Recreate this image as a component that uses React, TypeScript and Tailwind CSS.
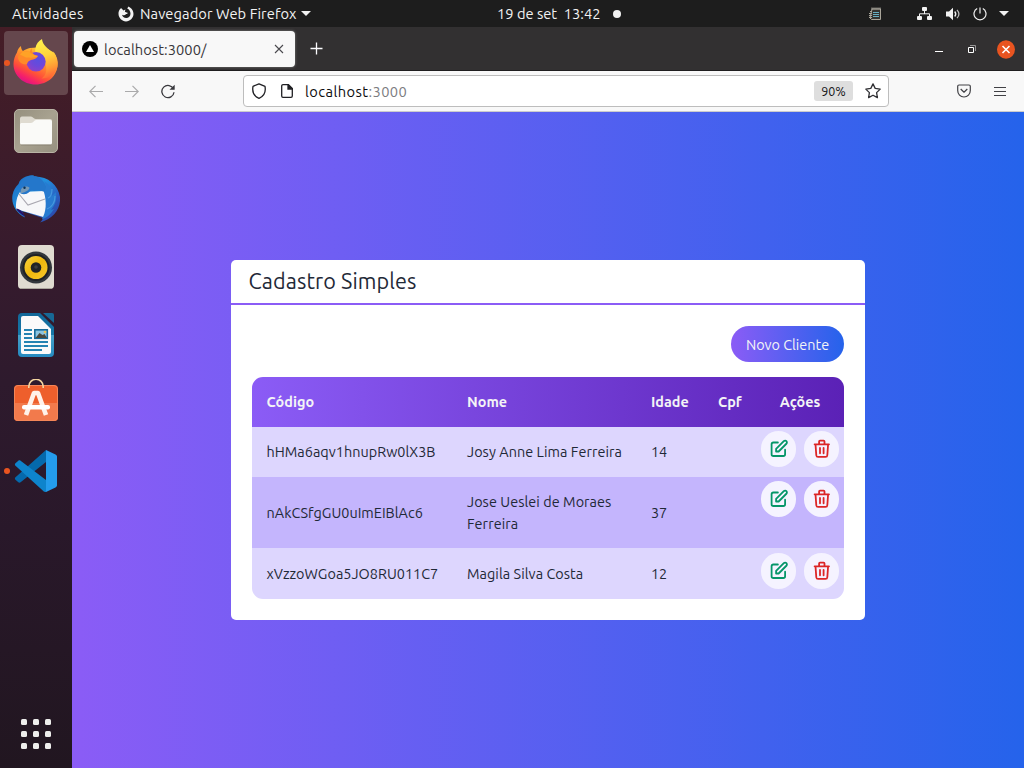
import React from "react";

type Cliente = { codigo: string; nome: string; idade: number };

const clientes: Cliente[] = [
  { codigo: "hHMa6aqv1hnupRw0lX3B", nome: "Josy Anne Lima Ferreira", idade: 14 },
  { codigo: "nAkCSfgGU0uImEIBlAc6", nome: "Jose Ueslei de Moraes Ferreira", idade: 37 },
  { codigo: "xVzzoWGoa5JO8RU011C7", nome: "Magila Silva Costa", idade: 12 },
];

function CaretDown() {
  return (
    <svg width="10" height="5" viewBox="0 0 10 5" fill="#f2f2f2">
      <path d="M0 0h10L5 5z" />
    </svg>
  );
}

function TopBar() {
  return (
    <header className="grid h-[27px] shrink-0 grid-cols-[497px_1fr] items-center bg-[#1d1d1d] text-[14.667px] leading-[27px] text-[#f2f2f2]">
      <div className="flex items-center pl-3">
        <span className="w-[106px] whitespace-nowrap tracking-[0.3px]">Atividades</span>
        <svg width="16" height="16" viewBox="0 0 16 16" className="mr-[6px]">
          <path d="M2.200 2.800C1 4.300.4 6 .5 8c.2 4 3.500 7.400 7.500 7.400S15.500 12 15.500 8c0-3-1.500-5.100-3.200-6.300L10.500.4 9.200 2.500c1.900.8 3.300 2.800 3.300 5A4.300 4.300 0 0 1 8.200 12C6 12 4.300 10.600 4 8.700c1.500 1 3.100.7 4.100-.7h1.300V6.400c-1 .2-1.500-.4-2.500-.7l.5-2.200-2 1-2-2.300z" fill="#f2f2f2" />
        </svg>
        <span className="w-[161px] whitespace-nowrap tracking-[0.08px]">Navegador Web Firefox</span>
        <CaretDown />
      </div>
      <div className="flex items-center">
        <span className="w-[116px] whitespace-pre">19 de set  13:42</span>
        <span className="size-2 rounded-full bg-[#f2f2f2]" />
        <div className="ml-auto flex items-center pr-[15px]">
          <svg width="13" height="13" viewBox="0 0 13 13" className="mr-[35px]">
            <path d="M3 2h8.500v10.500H2.500L1 11z" fill="#34332f" stroke="#a9a59a" />
            <path d="M3 .5v2M5 .5v2M7 .5v2M9 .5v2M11 .5v2" stroke="#bdb9ae" />
            <path d="M1 4.500h2M0 6.500h3M0 8.500h3M0 10.500h3" stroke="#a9a59a" />
            <path d="M4 5.500h6M4 7.500h6M4 9.500h6" stroke="#66adc0" />
          </svg>
          <svg width="15" height="13" viewBox="0 0 15 13" className="mr-[14px]" fill="#f2f2f2">
            <rect x="5" y="0" width="5" height="4" rx="1" />
            <rect x="0" y="9" width="5" height="4" rx="1" />
            <rect x="10" y="9" width="5" height="4" rx="1" />
            <path d="M7.500 4v3M2.500 9V6.800h10V9" fill="none" stroke="#f2f2f2" />
          </svg>
          <svg width="15" height="14" viewBox="0 0 15 14" className="mr-3" fill="none" stroke="#f2f2f2">
            <path d="M0 4.500h3L7 .8v12.400L3 9.500H0z" fill="#f2f2f2" stroke="none" />
            <path d="M8.700 4.500c1.300 1.500 1.300 3.500 0 5" strokeWidth="1.300" />
            <path d="M11 2.800c2.300 2.500 2.300 5.900 0 8.400" opacity=".75" strokeWidth="1.200" />
          </svg>
          <svg width="14" height="14" viewBox="0 0 14 14" className="mr-3" fill="none" stroke="#f2f2f2" strokeWidth="1.200">
            <path d="M4.200 1.500a6 6 0 1 0 5.600 0M7 .5v6" />
          </svg>
          <CaretDown />
        </div>
      </div>
    </header>
  );
}

function FirefoxIcon() {
  return (
    <svg width="48" height="48" viewBox="0 0 48 48">
      <defs>
        <linearGradient id="ffBody" x1=".85" y1=".1" x2=".3" y2="1">
          <stop offset="0" stopColor="#ffd93a" />
          <stop offset=".35" stopColor="#ff9a2e" />
          <stop offset=".68" stopColor="#ff5038" />
          <stop offset=".86" stopColor="#f5206a" />
          <stop offset="1" stopColor="#d8128a" />
        </linearGradient>
        <radialGradient id="ffGlobe" cx=".6" cy=".4" r=".65">
          <stop offset="0" stopColor="#5a4fe0" />
          <stop offset=".5" stopColor="#6c48da" />
          <stop offset="1" stopColor="#9040c8" />
        </radialGradient>
        <linearGradient id="ffTail" x1=".4" y1="0" x2=".6" y2="1">
          <stop offset="0" stopColor="#fff04c" />
          <stop offset=".4" stopColor="#ffd53c" />
          <stop offset=".75" stopColor="#ff9a34" />
          <stop offset="1" stopColor="#ff5f38" />
        </linearGradient>
      </defs>
      <path d="M5 13.500C5.500 10.500 7 8.500 9 7c0 2.500.8 4 2 5 2-1.500 4.500-2.500 7-3l14-1 9 5c3.500 3.500 4.500 8 4.500 12.500 0 11-9.500 20-22 20S1.500 36.500 1.500 25c0-4.500 1.500-8.500 3.500-11.500z" fill="url(#ffBody)" />
      <path d="M23.500 9c.5-4 3-7 6.500-9 .5 5 3.500 7.500 7.500 11 1.800 1.500 2.800 3 3.500 5l.5-3.500c3.500 5 5 10 4 15-1.500 7.500-8 12-16 12 4-2.500 5.500-7 4.500-12-.8-5-5-9-10-12.500-1-2-1-4-.5-6z" fill="url(#ffTail)" />
      <circle cx="24" cy="22.800" r="9.700" fill="url(#ffGlobe)" />
      <path d="M6 19c0-3 2-6 5-7 2.500 1 4.500 0 6.500 1l2-4c.3 3 1 4.500 1.500 5.500 1.500 1.500 3 2 5 2.500-1 2.500-4 3.300-7 4-2.300.8-3.500 2-4 4-2 1-8 0-9-6z" fill="#ff8a28" />
      <path d="M8 15.500l3-3.500c2.500 1 4.500 0 6.500 1 1.500 1.500 3 2.800 8.500 4-3 2.300-8 1.500-12 1.500z" fill="#ffa226" />
    </svg>
  );
}

function FilesIcon() {
  return (
    <svg width="48" height="48" viewBox="0 0 48 48">
      <defs>
        <linearGradient id="fileBg" x1="0" y1="0" x2="1" y2="1">
          <stop offset="0" stopColor="#958f7e" />
          <stop offset=".5" stopColor="#a8a290" />
          <stop offset="1" stopColor="#969080" />
        </linearGradient>
      </defs>
      <rect x="2.500" y="2.500" width="43" height="43" rx="4.500" fill="url(#fileBg)" stroke="#b9b4a5" />
      <path d="M8 12c0-1.500.7-2.500 2-2.500h9c2 0 2.500 2.500 4.500 2.500H38c1.500 0 2 .8 2 2v18H8z" fill="#dfdbd1" />
      <path d="M8 18c0-1.500.7-2 2-2h9c2.500 0 3-3 5-3h14c1.500 0 2 .7 2 2v20.500c0 1.500-.6 2-2 2H10c-1.400 0-2-.5-2-2z" fill="#fafaf8" />
      <path d="M9 38h30" stroke="#777162" opacity=".5" />
    </svg>
  );
}

function ThunderbirdIcon() {
  return (
    <svg width="48" height="48" viewBox="0 0 48 48">
      <defs>
        <linearGradient id="tbBlue" x1="0" y1="0" x2="1" y2="1">
          <stop offset="0" stopColor="#1a66c0" />
          <stop offset=".4" stopColor="#2390dc" />
          <stop offset=".7" stopColor="#2a5cc0" />
          <stop offset="1" stopColor="#2c3f9e" />
        </linearGradient>
      </defs>
      <path d="M14 1.500C18 .5 20 0 22 .5l-1 1C35 .5 46 9 48 22c1 12-7 22-20 25.500 1-1 2.500-2.500 3-4.500L10 36l3 6.500C4 38-1 29 .5 20c1-5 3-8 6-11 1-4 4-6 7.500-7.500z" fill="url(#tbBlue)" />
      <path d="M8 17l24-1c3 7 3.500 15 1 26.500L4 34C3.500 28 5 21 8 17z" fill="#f7f7f9" />
      <path d="M7 19l9 11 17-6" fill="none" stroke="#a9a7b0" strokeWidth="1.100" />
      <path d="M13 3c12-6 22 2 23 17-3-4-8-5.500-14-4-3-1.500-4 .5-6 2-2 1.500-5 1.500-7.500.5C7 12 8 6 13 3z" fill="#2477cb" />
      <path d="M9 18.500c-1-4 1-7 5-7 2 0 3 .5 3.500 1.500-1 3-5 4-8.500 5.500z" fill="#7698b5" />
      <path d="M4 33.500c4 .5 7 3 9 8C9 39.500 6 37 4 33.500z" fill="#241369" />
      <path d="M32 17c3-4 2-8 0-11 6 4 9 9 8 15l4-4c1 8-1 13-5 18l3-1c-3 5-7 9-12 10 4-7 5-16 2-27z" fill="#287bd0" />
      <path d="M36 23c3-1 4-5 4-9m-5 20c5-2 8-7 8-13" fill="none" stroke="#4797df" strokeWidth="1.200" />
      <circle cx="12.500" cy="12.800" r="1.200" fill="#0a3157" />
    </svg>
  );
}

function RhythmboxIcon() {
  return (
    <svg width="48" height="48" viewBox="0 0 48 48">
      <defs>
        <linearGradient id="rbCone" x1="0" y1="0" x2="1" y2="1">
          <stop offset="0" stopColor="#f8d23d" />
          <stop offset=".5" stopColor="#efb80e" />
          <stop offset="1" stopColor="#f7ca2c" />
        </linearGradient>
      </defs>
      <rect x="6" y="2" width="36" height="44" rx="4" fill="#dfdbd0" />
      <path d="M8 45.500h32" stroke="#aaa69c" />
      <circle cx="24" cy="24.500" r="16" fill="#32373c" />
      <circle cx="24" cy="24.500" r="13.600" fill="#1f2225" />
      <circle cx="24" cy="24.500" r="11.500" fill="url(#rbCone)" />
      <circle cx="24" cy="24.500" r="5.300" fill="#202326" />
      <circle cx="24" cy="24" r="1.800" fill="#3b3e40" />
    </svg>
  );
}

function WriterIcon() {
  return (
    <svg width="48" height="48" viewBox="0 0 48 48">
      <defs>
        <linearGradient id="writerBlue" x1="0" y1="0" x2="0" y2="1">
          <stop offset="0" stopColor="#126899" />
          <stop offset=".5" stopColor="#1678a8" />
          <stop offset=".51" stopColor="#45a0c8" />
          <stop offset="1" stopColor="#258ac0" />
        </linearGradient>
      </defs>
      <path d="M10 2h18l14 14v26a4 4 0 0 1-4 4H10a4 4 0 0 1-4-4V6a4 4 0 0 1 4-4z" fill="url(#writerBlue)" />
      <path d="M31 2h9a2 2 0 0 1 2 2v8z" fill="#176895" />
      <path d="M11 5h15l13 13v23a2 2 0 0 1-2 2H11a2 2 0 0 1-2-2V7a2 2 0 0 1 2-2z" fill="#fafafa" />
      <path d="M12 19h8m-8 4h8m-8 4h8m-8 4h24m-24 4h24m-24 4h18" stroke="#2583b2" strokeWidth="2" />
      <rect x="22.800" y="18.800" width="12.500" height="8.500" fill="#8bc4e1" stroke="#176a98" strokeWidth="1.600" />
      <path d="M23.500 27l4-5 3 2 2-1 2.500 4z" fill="#494940" />
      <circle cx="33" cy="21" r="1.300" fill="#e9c45b" />
    </svg>
  );
}

function SoftwareIcon() {
  return (
    <svg width="48" height="48" viewBox="0 0 48 48">
      <rect x="2" y="6" width="44" height="36" rx="4" fill="#ee5f2c" />
      <path d="M2 24h44v14a4 4 0 0 1-4 4H6a4 4 0 0 1-4-4z" fill="#f27a4c" />
      <rect x="2.500" y="6.500" width="43" height="35" rx="3.500" fill="none" stroke="#f48658" />
      <path d="M16.800 9V7.500a7.200 7.200 0 0 1 14.400 0V9" fill="none" stroke="#f3d5a0" strokeWidth="1.600" />
      <path d="M14 36l8-22h4l8 22" fill="none" stroke="#fff2ea" strokeWidth="4.600" strokeLinejoin="round" />
      <rect x="10" y="26" width="28" height="4.500" rx="2" fill="#fff" />
    </svg>
  );
}

function CodeIcon() {
  return (
    <svg width="48" height="48" viewBox="0 0 48 48">
      <path d="M34 3L3.500 30.300c-.8.800-.8 1.700 0 2.500l2.800 2.500c.7.600 1.600.6 2.300 0L34 15z" fill="#0569ac" />
      <path d="M3.500 16.200l2.800-2.500c.7-.6 1.600-.6 2.300 0L34 33v12c-1 0-2-.3-3-1.300L3.500 18.700c-.8-.8-.8-1.700 0-2.500z" fill="#0e84cc" />
      <path d="M34 3l9.500 4.500c1 .5 1.500 1.200 1.500 2.200v28.600c0 1-.6 1.800-1.500 2.200L34 45z" fill="#249cec" />
    </svg>
  );
}

const dockApps = [
  { name: "firefox", Icon: FirefoxIcon, active: true, running: true },
  { name: "files", Icon: FilesIcon, active: false, running: false },
  { name: "thunderbird", Icon: ThunderbirdIcon, active: false, running: false },
  { name: "rhythmbox", Icon: RhythmboxIcon, active: false, running: false },
  { name: "writer", Icon: WriterIcon, active: false, running: false },
  { name: "software", Icon: SoftwareIcon, active: false, running: false },
  { name: "code", Icon: CodeIcon, active: false, running: true },
];

function Dock() {
  return (
    <aside className="flex w-[72px] shrink-0 flex-col bg-[linear-gradient(180deg,#451d26_0%,#371b2d_30%,#2e1a2d_48%,#29182a_68%,#211620_100%)] pt-1">
      <nav className="flex flex-col gap-1 px-1">
        {dockApps.map(({ name, Icon, active, running }) => (
          <div key={name} className={`relative flex size-16 items-center justify-center rounded-[4px] ${active ? "bg-[#65474d]" : ""}`}>
            {running && <span className="absolute left-0 size-[6px] rounded-full bg-[#e95420]" />}
            <Icon />
          </div>
        ))}
      </nav>
      <div className="mt-auto mb-[19px] grid grid-cols-3 gap-[6px] self-center">
        {Array.from({ length: 9 }, (_, i) => (
          <span key={i} className="size-[6px] rounded-[1.5px] bg-[#eeeeec]" />
        ))}
      </div>
    </aside>
  );
}

function TabStrip() {
  return (
    <div className="flex h-11 shrink-0 items-center border-b border-[#1f1e1f] bg-[#323031] pr-[9px] pl-[2px]">
      <div className="flex h-9 w-[221px] items-center rounded-[4px] bg-[#f8f8f8] pr-[11px] pl-2 text-[14.667px] text-[#38373b] shadow-[0_0_3px_rgba(160,160,160,.7)]">
        <svg width="16" height="16" viewBox="0 0 16 16" className="mr-[6px]">
          <circle cx="8" cy="8" r="8" />
          <path d="M8 4l4 7H4z" fill="#fff" />
        </svg>
        <span className="grow pt-[2px] tracking-[0.05px]">localhost:3000/</span>
        <svg width="10" height="10" viewBox="0 0 10 10" stroke="#4a494e" strokeWidth="1.100">
          <path d="M1 1l8 8M9 1L1 9" />
        </svg>
      </div>
      <svg width="13" height="13" viewBox="0 0 13 13" className="ml-[15px]" stroke="#fbfbfe" strokeWidth="1.300">
        <path d="M6.500 .5v12M.5 6.500h12" />
      </svg>
      <div className="ml-auto flex items-center pt-px">
        <svg width="8" height="8" viewBox="0 0 8 8" className="mr-[25px]" stroke="#fff">
          <path d="M0 6.500h8" />
        </svg>
        <svg width="8" height="8" viewBox="0 0 8 8" className="mr-[21px]" fill="none" stroke="#fff">
          <path d="M2 .5h5.500V6" stroke="#969596" />
          <path d="M.5 2.500h5v5h-5z" />
        </svg>
        <svg width="18" height="19" viewBox="0 0 18 19">
          <ellipse cx="9" cy="9.500" rx="9" ry="9.300" fill="#e95420" />
          <path d="M5.500 6l7 7M12.500 6l-7 7" stroke="#fff" strokeWidth="1.600" />
        </svg>
      </div>
    </div>
  );
}

function NavBar() {
  return (
    <div className="flex h-[41px] shrink-0 items-center border-b border-[#cccccc] bg-[#f8f8f8] pr-[18px] pl-[17px]">
      <svg width="14" height="13" viewBox="0 0 14 13" fill="none" stroke="#aaaaab" strokeWidth="1.200" className="mr-[22px]">
        <path d="M14 6.500H.8M6.500.8L.8 6.500l5.700 5.700" />
      </svg>
      <svg width="14" height="13" viewBox="0 0 14 13" fill="none" stroke="#aaaaab" strokeWidth="1.200" className="mr-[22px]">
        <path d="M0 6.500h13.200M7.500.8l5.700 5.700-5.700 5.700" />
      </svg>
      <svg width="14" height="15" viewBox="0 0 14 15" fill="none" stroke="#39383d" strokeWidth="1.300">
        <path d="M12.500 5A6.100 6.100 0 1 0 13 8.200" />
        <path d="M13.700.7v5H8.500z" fill="#39383d" stroke="none" />
      </svg>
      <div className="ml-[68px] flex h-8 w-[646px] items-center rounded-[4px] border border-[#bdbdbd] bg-white pr-[7px] pl-2 text-[14.667px]">
        <svg width="14" height="16" viewBox="0 0 14 16" fill="none" stroke="#202024" strokeWidth="1.300" strokeLinejoin="round">
          <path d="M7 .8l6 2.500c.8 4.500-.3 9.700-6 12C1.300 13 .2 7.800 1 3.300z" />
        </svg>
        <svg width="12" height="14" viewBox="0 0 12 14" fill="none" stroke="#202024" strokeWidth="1.300" className="ml-[15px]">
          <path d="M7.500.7H2A1.300 1.300 0 0 0 .7 2v10A1.300 1.300 0 0 0 2 13.300h8a1.300 1.300 0 0 0 1.300-1.300V4.500z" strokeLinejoin="round" />
          <path d="M7 .7V5h4.300z" fill="#202024" />
        </svg>
        <span className="ml-3 grow pt-[2px] tracking-[0.42px] text-[#0c0c0d]">
          localhost<span className="text-[#7c7c7f]">:3000</span>
        </span>
        <span className="mr-3 flex h-5 w-[39px] items-center justify-center rounded-[3px] bg-[#dedede] pt-px text-[12.5px] text-[#151518]">90%</span>
        <svg width="16" height="16" viewBox="0 0 16 16" fill="none" stroke="#303034" strokeWidth="1.300" strokeLinejoin="round">
          <path d="M8 .9l2.200 4.500 5 .7-3.600 3.500.8 5L8 12.200l-4.400 2.400.8-5L.8 6.100l5-.7z" />
        </svg>
      </div>
      <svg width="14" height="14" viewBox="0 0 14 14" fill="none" stroke="#414145" strokeWidth="1.200" className="ml-auto mr-[23px]">
        <path d="M2 1h10a1.300 1.300 0 0 1 1.300 1.300v4.200c0 3.700-2.700 6.500-6.300 6.500S.7 10.200.7 6.500V2.300A1.300 1.300 0 0 1 2 1zM3.700 5L7 8.200 10.300 5" strokeLinejoin="round" />
      </svg>
      <svg width="12" height="11" viewBox="0 0 12 11" stroke="#414145" strokeWidth="1.200">
        <path d="M0 1.500h12M0 5.500h12M0 9.500h12" />
      </svg>
    </div>
  );
}

const iconeEdicao = "M11 5H6a2 2 0 00-2 2v11a2 2 0 002 2h11a2 2 0 002-2v-5m-1.414-9.414a2 2 0 112.828 2.828L11.828 15H9v-2.828l8.586-8.586z";
const iconeLixo = "M19 7l-.867 12.142A2 2 0 0116.138 21H7.862a2 2 0 01-1.995-1.858L5 7m5 4v6m4-6v6m1-10V4a1 1 0 00-1-1h-4a1 1 0 00-1 1v3M4 7h16";

function BotaoIcone({ d, cor, label }: { d: string; cor: string; label: string }) {
  return (
    <button aria-label={label} className={`flex h-9 w-[35px] items-center justify-center rounded-full bg-[#f5f3ff] ${cor}`}>
      <svg className="size-[21.6px] shrink-0" viewBox="0 0 24 24" fill="none" stroke="currentColor" strokeWidth="2">
        <path d={d} strokeLinecap="round" strokeLinejoin="round" />
      </svg>
    </button>
  );
}

function Tabela() {
  return (
    <div className="overflow-hidden rounded-[11px]">
      <div className="grid h-[50px] grid-cols-[200px_184.5px_66.5px_53px_88px] items-center bg-[linear-gradient(90deg,#8b5cf6,#5b21b6)] text-[14.4px] leading-[22px] font-bold text-[#f3f4f6]">
        <span className="pl-[14.5px] tracking-[0.04px]">Código</span>
        <span className="pl-[15px]">Nome</span>
        <span className="pl-[14.5px]">Idade</span>
        <span className="pl-[15px]">Cpf</span>
        <span className="text-center">Ações</span>
      </div>
      {clientes.map((c, i) => (
        <div
          key={c.codigo}
          className={`grid grid-cols-[200px_184.5px_66.5px_53px_88px] items-center text-[14.4px] leading-[22px] text-[#1f2937] ${
            i === 1 ? "h-[71px] bg-[#c4b5fd]" : i === 2 ? "h-[51px] bg-[#ddd6fe]" : "h-[50px] bg-[#ddd6fe]"
          }`}
        >
          <span className="pl-[14.5px] tracking-[0.03px] whitespace-nowrap">{c.codigo}</span>
          <span className="pl-[15px] tracking-[0.06px]">{c.nome}</span>
          <span className="pl-[14.5px]">{c.idade}</span>
          <span />
          <div className={`flex gap-2 self-start pl-[5px] ${i === 2 ? "pt-[5px]" : "pt-1"}`}>
            <BotaoIcone d={iconeEdicao} cor="text-[#059669]" label="Editar" />
            <BotaoIcone d={iconeLixo} cor="text-[#dc2626]" label="Excluir" />
          </div>
        </div>
      ))}
    </div>
  );
}

function Pagina() {
  return (
    <main className="flex grow items-start justify-center bg-[linear-gradient(90deg,#8b5cf6,#2563eb)] pt-[148px]">
      <section className="h-[360px] w-[634px] rounded-[5px] bg-white">
        <h1 className="h-[45px] border-b-2 border-[#8b5cf6] pl-[17.5px] text-[21.6px] leading-[43px] text-[#1f2937]">
          <span className="tracking-[0.1px]">Cadastro Simples</span>
        </h1>
        <div className="px-[21px] pt-[21px]">
          <div className="mb-[15px] flex justify-end">
            <button className="h-9 w-[113px] rounded-full bg-[linear-gradient(90deg,#8b5cf6,#2563eb)] pt-[2px] text-[14.4px] leading-[22px] whitespace-nowrap text-[#f3f4f6]">Novo Cliente</button>
          </div>
          <Tabela />
        </div>
      </section>
    </main>
  );
}

export default function App() {
  return (
    <div className="flex h-[768px] w-[1024px] flex-col overflow-hidden font-[Ubuntu,'Noto_Sans',sans-serif]">
      <TopBar />
      <div className="flex min-h-0 grow">
        <Dock />
        <div className="flex min-w-0 grow flex-col">
          <TabStrip />
          <NavBar />
          <Pagina />
        </div>
      </div>
    </div>
  );
}
